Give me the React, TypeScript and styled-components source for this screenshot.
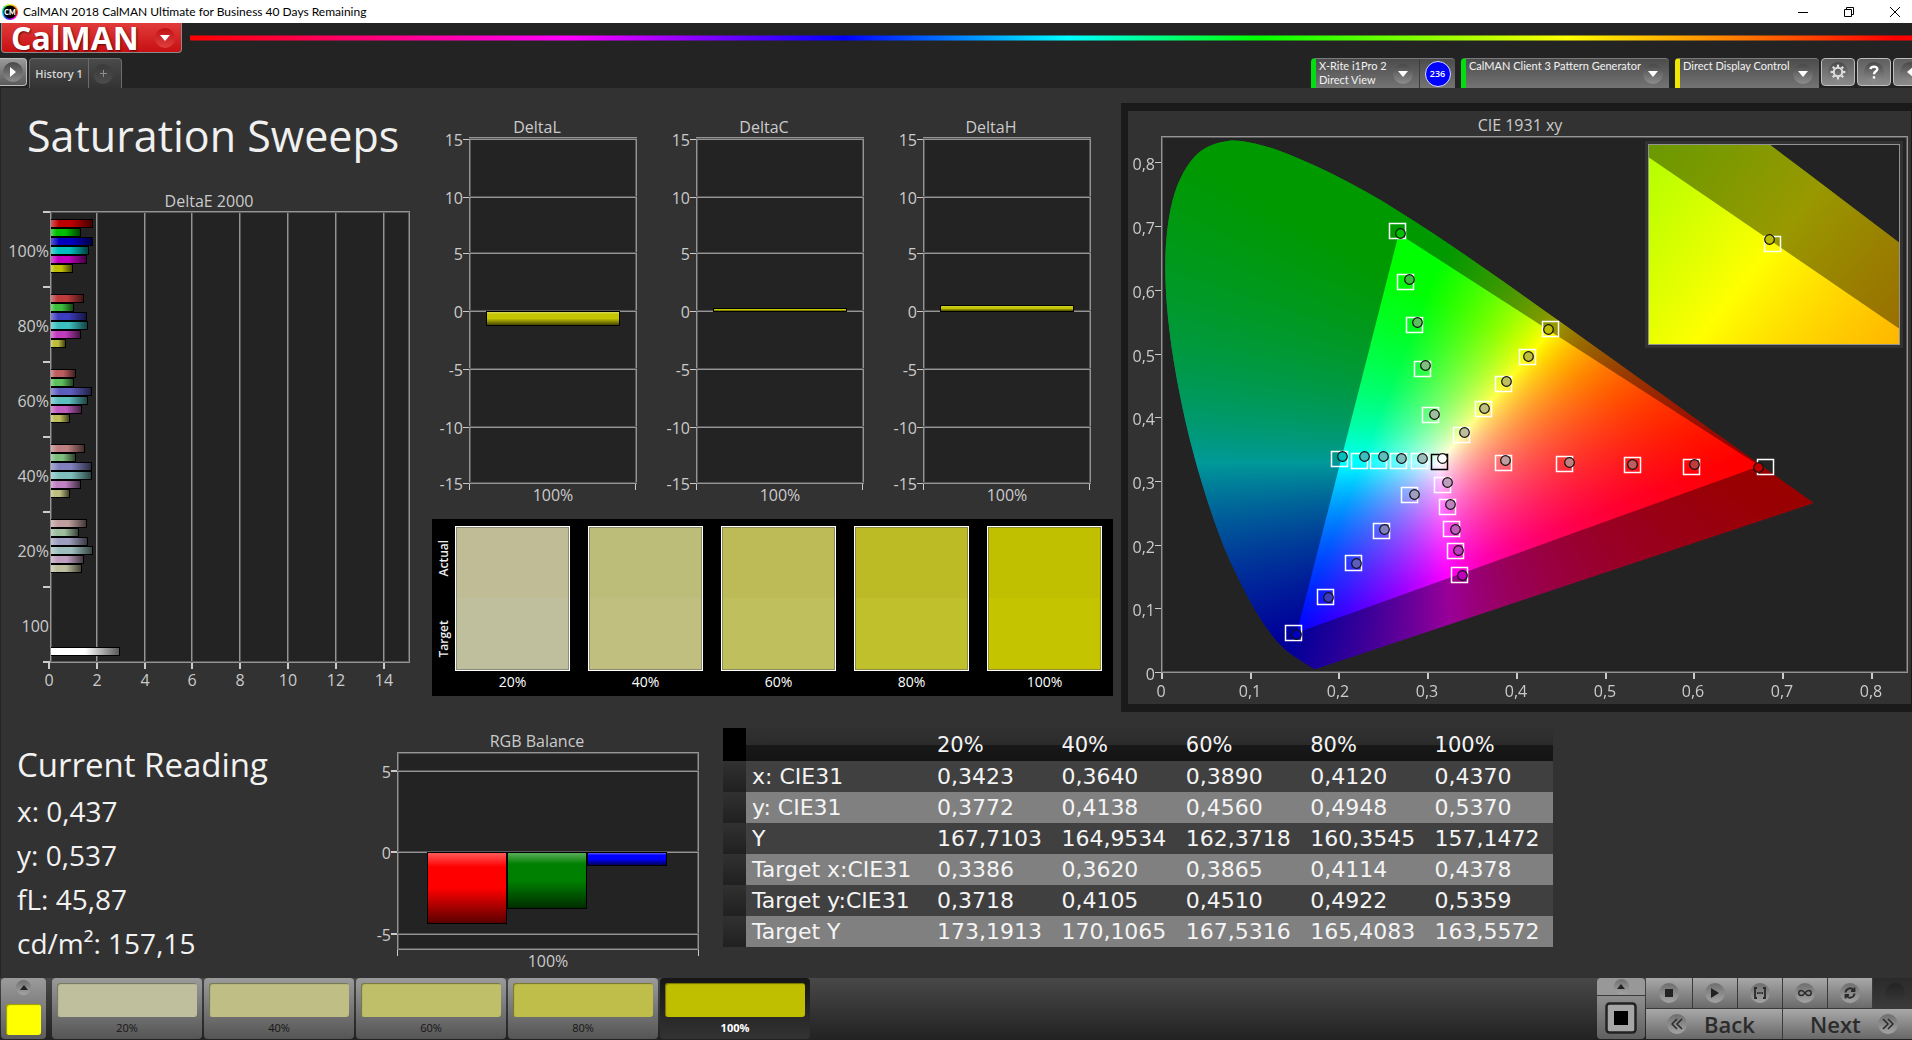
import React, { useLayoutEffect, useRef } from "react";
import styled, { createGlobalStyle, css } from "styled-components";

/* ---------- shared values ---------- */

const SANS = `"Open Sans", "Noto Sans", sans-serif`;
const SMALL = `Lato, "Open Sans", sans-serif`;
const LABEL = "#cbcbcb";
const PLOT = "#232323";
const PANEL = "#323232";

const LEVELS = ["100%", "80%", "60%", "40%", "20%"];
const LOW = [0, 60, 93, 128, 158];
const HIGH = 190;

type Series = "red" | "green" | "blue" | "cyan" | "magenta" | "yellow";
const SERIES: Series[] = ["red", "green", "blue", "cyan", "magenta", "yellow"];
const MASK: Record<Series, number[]> = {
  red: [1, 0, 0],
  green: [0, 1, 0],
  blue: [0, 0, 1],
  cyan: [0, 1, 1],
  magenta: [1, 0, 1],
  yellow: [1, 1, 0],
};
const tone = (series: Series, level: number) =>
  `rgb(${MASK[series].map((on) => (on ? HIGH : LOW[level])).join(",")})`;

/* ---------- global and frame ---------- */

const GlobalStyle = createGlobalStyle`
  *, *::before, *::after { box-sizing: border-box; }
  body { margin: 0; background: ${PANEL}; overflow: hidden; font-family: ${SANS}; }
  button { font-family: inherit; margin: 0; padding: 0; border: 0; cursor: pointer; }
  h1, h2, p { margin: 0; font-weight: 400; }
  svg { display: block; }
`;

const Window = styled.div`
  display: flex;
  flex-direction: column;
  min-height: 100vh;
  overflow: hidden;
`;

const TitleBar = styled.header`
  display: flex;
  align-items: center;
  height: 23px;
  background: #fff;
  color: #000;
  font-family: ${SMALL};
  font-size: 12px;
`;

const AppIcon = styled.span`
  display: grid;
  place-items: center;
  width: 16px;
  height: 16px;
  margin: 0 5px 0 2px;
  border-radius: 50%;
  background: radial-gradient(circle, #000 6px, transparent 7px),
    conic-gradient(#ff2, #f80, #f22, #f0f, #33f, #0cf, #0d4, #ff2);
  color: #fff;
  font-size: 7px;
  font-weight: 800;
`;

const WindowButtons = styled.div`
  display: flex;
  margin-left: auto;
`;

const WindowButton = styled.button`
  display: grid;
  place-items: center;
  width: 46px;
  height: 23px;
  background: none;
  &:last-child {
    width: 40px;
    padding-left: 6px;
  }
`;

const Header = styled.div`
  height: 65px;
  background: ${PLOT};
  display: flex;
  flex-direction: column;
  justify-content: space-between;
`;

const BrandRow = styled.div`
  display: flex;
  align-items: center;
  gap: 8px;
  padding-left: 1px;
`;

const Brand = styled.button`
  display: flex;
  align-items: center;
  justify-content: space-between;
  width: 181px;
  height: 30px;
  padding: 0 6px 0 9px;
  border: 1px solid #8b8b8b;
  border-top: 0;
  border-radius: 0 0 4px 4px;
  background: linear-gradient(#e03c3a, #c80f12);
  color: #fff;
  font: 700 32px/28px ${SANS};
  text-shadow: 1px 1px 2px rgba(60, 0, 0, 0.8);
`;

const Spectrum = styled.div`
  flex: 1;
  height: 6px;
  border: solid rgba(35, 35, 35, 0.5);
  border-width: 1px 0;
  background: linear-gradient(
    90deg,
    #f00 0%,
    #f0f 22%,
    #00f 38%,
    #0ff 51%,
    #0f0 62%,
    #ff0 80%,
    #f00 99%
  );
`;

const TabRow = styled.div`
  display: flex;
  align-items: flex-end;
  height: 31px;
`;

const Disc = styled.span<{ $size?: number; $dark?: boolean }>`
  display: grid;
  place-items: center;
  flex: none;
  width: ${(p) => p.$size ?? 20}px;
  height: ${(p) => p.$size ?? 20}px;
  border-radius: 50%;
  background: ${(p) =>
    p.$dark ? "linear-gradient(#3a3a3a, #4c4c4c)" : "linear-gradient(#484848, #8d8d8d)"};
`;

const BrandDisc = styled(Disc)`
  background: linear-gradient(#c01014, #e04040);
`;

const SquareButton = styled.button<{ $edge?: boolean }>`
  display: grid;
  place-items: center;
  flex: none;
  width: 34px;
  height: 28px;
  margin-bottom: 2px;
  border: 1px solid #bdbdbd;
  border-radius: 4px;
  background: linear-gradient(#5e5e5e, #8b8b8b);
  color: #fff;
  ${(p) =>
    p.$edge &&
    css`
      width: 27px;
      border-left: 0;
      border-radius: 0 4px 4px 0;
      background: linear-gradient(#9a9a9a, #5a5a5a);
    `}
`;

const Tabs = styled.div`
  display: flex;
  height: 30px;
  margin-left: 2px;
  border: 1px solid #6c6c6c;
  border-bottom: 0;
  border-radius: 4px 4px 0 0;
  background: linear-gradient(#4a4a4a, #333);
`;

const Tab = styled.button`
  display: grid;
  place-items: center;
  width: 58px;
  background: none;
  color: #d5d5d5;
  font-size: 11px;
  font-weight: 600;
  & + & {
    width: 33px;
    padding-right: 4px;
    border-left: 1px solid #6c6c6c;
    color: #8d8d8d;
  }
`;

const Sources = styled.div`
  display: flex;
  align-items: flex-end;
  gap: 6px;
  height: 31px;
  margin-left: auto;
  margin-right: -15px;
`;

const Source = styled.div<{ $led: string; $width: number }>`
  display: flex;
  width: ${(p) => p.$width}px;
  height: 30px;
  border-top: 1px solid #7b7b7b;
  border-left: 5px solid ${(p) => p.$led};
  border-radius: 4px 4px 0 0;
  background: linear-gradient(#4c4c4c, #747474);
`;

const SourceButton = styled.button`
  display: flex;
  flex: 1;
  align-items: center;
  justify-content: space-between;
  padding: 0 6px 0 3px;
  background: none;
  color: #f2f2f2;
  font-family: ${SMALL};
  font-size: 11px;
  line-height: 14px;
  text-align: left;
  white-space: nowrap;
`;

const SourceText = styled.span`
  align-self: flex-start;
`;

const CounterCell = styled.div`
  display: grid;
  place-items: center;
  width: 36px;
  border-left: 1px solid #3c3c3c;
`;

const Counter = styled.span`
  display: grid;
  place-items: center;
  width: 26px;
  height: 26px;
  border: 1px solid #dcdcff;
  border-radius: 50%;
  background: #00f;
  color: #fff;
  font-size: 9px;
  font-weight: 600;
`;

const ToolButtons = styled.div`
  display: flex;
  gap: 2px;
  margin-left: -4px;
`;

/* ---------- page ---------- */

const Page = styled.main`
  flex: 1;
  background: ${PANEL};
  border-left: 1px solid #242424;
`;

const TopGrid = styled.section`
  display: grid;
  grid-template-columns: 431fr 681fr 799fr;
  align-items: start;
`;

const BottomGrid = styled.section`
  display: grid;
  grid-template-columns: 374fr 348fr 830fr 359fr;
  align-items: start;
  padding-top: 10px;
`;

const Chart = styled.svg`
  width: 100%;
  height: auto;
  font-family: ${SANS};
  font-size: 16px;
  fill: ${LABEL};
`;

const Title = styled.h1`
  padding: 0 0 4px 26px;
  color: #f0f0f0;
  font-size: 43px;
  line-height: 96px;
  white-space: nowrap;
`;

const Middle = styled.div`
  padding-top: 24px;
`;

const DeltaRow = styled.div`
  display: grid;
  grid-template-columns: repeat(3, 1fr);
`;

const SwatchPanel = styled.div`
  display: grid;
  grid-template-columns: 23px 1fr;
  height: 177px;
  padding: 7px 11px 0 0;
  background: #000;
  color: #fff;
`;

const SideLabels = styled.div`
  display: flex;
  flex-direction: column;
  height: 161px;
  margin-top: -8px;
`;

const SideLabel = styled.span`
  flex: 1;
  align-self: center;
  writing-mode: vertical-rl;
  transform: rotate(180deg);
  text-align: center;
  color: #eee;
  font-size: 12px;
  font-weight: 600;
  line-height: 18px;
`;

const Swatches = styled.div`
  display: grid;
  grid-template-columns: repeat(5, 1fr);
  gap: 18px;
`;

const SwatchItem = styled.figure`
  margin: 0;
  text-align: center;
  font-size: 14px;
  line-height: 22px;
`;

const SwatchBox = styled.div<{ $actual: string; $target: string }>`
  height: 145px;
  border: 1px solid #fff;
  box-shadow: inset 0 0 0 1px rgba(90, 90, 90, 0.5);
  background: linear-gradient(${(p) => p.$actual} 50%, ${(p) => p.$target} 50%);
`;

const CieColumn = styled.div`
  padding: 15px 0 0 8px;
`;

const CieFrame = styled.div`
  border: solid #1a1a1a;
  border-width: 8px 1px 8px 7px;
  background: ${PANEL};
`;

const Reading = styled.div`
  padding: 9px 0 0 16px;
  color: #f2f2f2;
  white-space: nowrap;
`;

const ReadingTitle = styled.h2`
  font-size: 33px;
  line-height: 48px;
`;

const ReadingValue = styled.p`
  font-size: 28px;
  line-height: 44px;
`;

const DataTable = styled.table`
  width: 100%;
  margin-top: -4px;
  border-collapse: collapse;
  table-layout: fixed;
  color: #f4f4f4;
  font-family: "DejaVu Sans", sans-serif;
  font-size: 22px;
  line-height: 30px;
  white-space: nowrap;
  th,
  td {
    padding: 1px 0 0 6px;
    text-align: left;
    font-weight: 400;
  }
`;

const HeadRow = styled.tr`
  height: 33px;
  background: linear-gradient(#313131 0, #2b2b2b 50%, #181818 52%, #141414 100%);
  th {
    font-size: 21px;
  }
  td:first-child {
    background: #000;
  }
`;

const BodyRow = styled.tr<{ $light: boolean }>`
  height: 31px;
  background: ${(p) => (p.$light ? "#808080" : "#404040")};
  td:first-child {
    background: linear-gradient(#313131, #202020);
  }
`;

/* ---------- footer ---------- */

const Footer = styled.footer`
  display: flex;
  gap: 2px;
  height: 62px;
  padding: 0 0 1px 1px;
  background: linear-gradient(#484848, #222);
`;

const FooterTile = styled.button`
  display: flex;
  flex-direction: column;
  align-items: center;
  justify-content: space-between;
  width: 45px;
  margin-right: 4px;
  padding: 2px 0 4px;
  border-radius: 4px;
  background: linear-gradient(#9b9b9b, #5c5c5c);
`;

const Chip = styled.span<{ $fill: string }>`
  display: block;
  width: 35px;
  height: 31px;
  border-radius: 3px;
  box-shadow: inset 1px 1px 1px rgba(0, 0, 0, 0.4);
  background: ${(p) => p.$fill};
`;

const PatchButton = styled.button<{ $active: boolean }>`
  display: flex;
  flex-direction: column;
  width: 150px;
  padding: 5px 5px 0;
  border-radius: 4px;
  background: ${(p) =>
    p.$active ? "linear-gradient(#161616, #333)" : "linear-gradient(#9b9b9b, #555)"};
  color: ${(p) => (p.$active ? "#fff" : "#161616")};
  font-size: 11px;
  font-weight: ${(p) => (p.$active ? 700 : 400)};
  line-height: 22px;
`;

const PatchFill = styled(Chip)`
  width: 100%;
  height: 36px;
`;

const PatchLabel = styled.span`
  align-self: center;
`;

const Transport = styled.div`
  display: flex;
  gap: 1px;
  margin-left: auto;
  margin-right: -5px;
`;

const StackTile = styled.div`
  display: grid;
  grid-template-rows: 18px 1fr;
  width: 48px;
`;

const StackButton = styled.button`
  display: grid;
  place-items: center;
  border-radius: 0 0 4px 4px;
  background: linear-gradient(#8e8e8e, #606060);
  &:first-child {
    border-bottom: 1px solid #3c3c3c;
    border-radius: 4px 4px 0 0;
    background: #989898;
  }
`;

const TransportGrid = styled.div`
  display: grid;
  grid-template-columns: 46px repeat(5, 44px);
  grid-template-rows: 30px 30px;
  gap: 1px;
  background: #3a3a3a;
`;

const TransportButton = styled.button<{ $off?: boolean }>`
  display: grid;
  place-items: center;
  background: ${(p) => (p.$off ? "linear-gradient(#2a2a2a, #3a3a3a)" : "linear-gradient(#a8a8a8, #6a6a6a)")};
`;

const StepButton = styled.button`
  display: flex;
  align-items: center;
  grid-column: span 3;
  gap: 17px;
  padding-left: 21px;
  background: linear-gradient(#a8a8a8, #686868);
  color: #2b2b2b;
  font-size: 22px;
  font-weight: 600;
  line-height: 30px;
  & + & {
    padding-left: 27px;
  }
`;

const LightDisc = styled(Disc)`
  background: linear-gradient(#6e6e6e, #a4a4a4);
`;

const OffDisc = styled(Disc)`
  background: linear-gradient(#232323, #383838);
`;

/* ---------- chart parts ---------- */

const GridH = ({ x, y, w }: { x: number; y: number; w: number }) => (
  <>
    <rect x={x} y={y - 1} width={w} height={1} fill="#585858" />
    <rect x={x} y={y} width={w} height={1} fill="#949494" />
  </>
);

const GridV = ({ x, y, h }: { x: number; y: number; h: number }) => (
  <>
    <rect x={x - 1} y={y} width={1} height={h} fill="#949494" />
    <rect x={x} y={y} width={1} height={h} fill="#585858" />
  </>
);

const Frame = ({ x, y, w, h, fill = "none" }: { x: number; y: number; w: number; h: number; fill?: string }) => (
  <>
    <rect x={x} y={y} width={w} height={h} fill={fill} />
    <rect x={x + 0.5} y={y + 0.5} width={w - 1} height={h - 1} fill="none" stroke="#949494" />
    <rect x={x + 1.5} y={y + 1.5} width={w - 3} height={h - 3} fill="none" stroke="#585858" />
  </>
);

const Shades = ({ id, vertical }: { id: string; vertical?: boolean }) => (
  <defs>
    <linearGradient id={id} x2={vertical ? 0 : 1} y2={vertical ? 1 : 0}>
      <stop offset="0" stopColor="#fff" stopOpacity="0.35" />
      <stop offset="0.2" stopColor="#fff" stopOpacity="0" />
      <stop offset="0.5" stopColor="#000" stopOpacity="0" />
      <stop offset="1" stopColor="#000" stopOpacity="0.65" />
    </linearGradient>
  </defs>
);

const Bar = ({ x, y, w, h, fill, shade }: { x: number; y: number; w: number; h: number; fill: string; shade: string }) => (
  <>
    <rect x={x} y={y} width={w} height={h} fill="#000" />
    <rect x={x + 1} y={y + 1} width={w - 2} height={h - 2} fill={fill} />
    <rect x={x + 1} y={y + 1} width={w - 2} height={h - 2} fill={`url(#${shade})`} />
  </>
);

/* ---------- DeltaE chart ---------- */

const DELTA_E = [
  [1.78, 1.28, 1.78, 1.65, 1.53, 0.95],
  [1.41, 1.0, 1.53, 1.57, 1.28, 0.65],
  [1.07, 1.0, 1.74, 1.57, 1.32, 0.82],
  [1.46, 1.07, 1.74, 1.74, 1.28, 0.82],
  [1.53, 1.2, 1.57, 1.78, 1.41, 1.32],
];

const DeltaEChart = () => {
  const unit = 23.9;
  return (
    <Chart viewBox="0 0 431 534" role="img" aria-label="DeltaE 2000">
      <Shades id="shadeE" />
      <text x="208" y="19" textAnchor="middle">DeltaE 2000</text>
      <rect x="49" y="23" width="360" height="452" fill={PLOT} />
      {[2, 4, 6, 8, 10, 12, 14].map((v) => (
        <GridV key={v} x={48 + Math.round(v * unit)} y={24} h={450} />
      ))}
      <Frame x={49} y={23} w={360} h={452} />
      {DELTA_E.map((row, level) =>
        row.map((v, i) => (
          <Bar
            key={`${level}-${i}`}
            x={49}
            y={31 + level * 75 + i * 9}
            w={Math.round(v * unit)}
            h={9}
            fill={tone(SERIES[i], level)}
            shade="shadeE"
          />
        ))
      )}
      <Bar x={49} y={459} w={70} h={9} fill="#fff" shade="shadeE" />
      <rect x="49" y="23" width="1" height="452" fill="#949494" />
      {[...LEVELS, "100"].map((label, i) => (
        <text key={label} x="48" y={69 + i * 75} textAnchor="end">{label}</text>
      ))}
      {[0, 1, 2, 3, 4, 5, 6].map((i) => (
        <rect key={i} x="42" y={23 + i * 75} width="7" height="2" />
      ))}
      {[0, 2, 4, 6, 8, 10, 12, 14].map((v) => (
        <React.Fragment key={v}>
          <rect x={47 + Math.round(v * unit)} y="475" width="2" height="6" />
          <text x={48 + Math.round(v * unit)} y="498" textAnchor="middle">{v}</text>
        </React.Fragment>
      ))}
    </Chart>
  );
};

/* ---------- DeltaL / C / H charts ---------- */

const DeltaChart = ({ name, top, height }: { name: string; top: number; height: number }) => (
  <Chart viewBox="0 0 227 407" role="img" aria-label={name}>
    <Shades id={`shade${name}`} vertical />
    <text x="105" y="21" textAnchor="middle">{name}</text>
    <Frame x={37} y={25} w={168} h={347} fill={PLOT} />
    {[15, 10, 5, 0, -5, -10, -15].map((v, i) => {
      const y = [27, 85, 141, 199, 257, 315, 371][i];
      return (
        <React.Fragment key={v}>
          <GridH x={37} y={y} w={168} />
          <rect x="31" y={y} width="6" height="1" />
          <text x="31" y={y + 7} textAnchor="end">{v}</text>
        </React.Fragment>
      );
    })}
    <Bar x={54} y={top} w={134} h={height} fill="#c4c400" shade={`shade${name}`} />
    <rect x="37" y="372" width="1" height="6" />
    <rect x="203" y="372" width="1" height="6" />
    <text x="121" y="389" textAnchor="middle">100%</text>
  </Chart>
);

/* ---------- RGB balance chart ---------- */

const RgbChart = () => (
  <Chart viewBox="0 0 348 246" role="img" aria-label="RGB Balance">
    <Shades id="shadeRgb" vertical />
    <text x="162" y="15" textAnchor="middle">RGB Balance</text>
    <Frame x={22} y={20} w={302} h={198} fill={PLOT} />
    {[5, 0, -5].map((v, i) => {
      const y = [39, 120, 202][i];
      return (
        <React.Fragment key={v}>
          <GridH x={22} y={y} w={302} />
          <rect x="16" y={y - 1} width="6" height="2" />
          <text x="16" y={y + 7} textAnchor="end">{v}</text>
        </React.Fragment>
      );
    })}
    <Bar x={52} y={120} w={80} h={72} fill="#f00" shade="shadeRgb" />
    <Bar x={132} y={120} w={80} h={57} fill="#008000" shade="shadeRgb" />
    <Bar x={212} y={120} w={80} h={14} fill="#00f" shade="shadeRgb" />
    <rect x="22" y="218" width="1" height="6" />
    <rect x="323" y="218" width="1" height="6" />
    <text x="173" y="235" textAnchor="middle">100%</text>
  </Chart>
);

/* ---------- CIE chart ---------- */

const LOCUS: [number, number][] = [
  [0.1741, 0.005], [0.1714, 0.0051], [0.1689, 0.0069], [0.1644, 0.0109], [0.1566, 0.0177],
  [0.144, 0.0297], [0.1355, 0.0399], [0.1241, 0.0578], [0.1096, 0.0868], [0.0913, 0.1327],
  [0.0687, 0.2007], [0.0454, 0.295], [0.0235, 0.4127], [0.0082, 0.5384], [0.0039, 0.6548],
  [0.0139, 0.7502], [0.0389, 0.812], [0.0743, 0.8338], [0.1142, 0.8262], [0.1547, 0.8059],
  [0.1929, 0.7816], [0.2296, 0.7543], [0.2658, 0.7243], [0.3016, 0.6923], [0.3373, 0.6589],
  [0.3731, 0.6245], [0.4087, 0.5896], [0.4441, 0.5547], [0.4788, 0.5202], [0.5125, 0.4866],
  [0.5448, 0.4544], [0.5752, 0.4242], [0.6029, 0.3965], [0.627, 0.3725], [0.6482, 0.3514],
  [0.6658, 0.334], [0.6915, 0.3083], [0.7079, 0.292], [0.719, 0.2809], [0.7347, 0.2653],
];
const GAMUT: [number, number][] = [[0.674, 0.3235], [0.267, 0.688], [0.152, 0.0615]];

type GamutProps = { width: number; height: number; x0: number; x1: number; y0: number; y1: number };

/* Paints every chromaticity at full brightness inside the gamut and dimmed outside it. */
const GamutCanvas = ({ width, height, x0, x1, y0, y1 }: GamutProps) => {
  const ref = useRef<HTMLCanvasElement>(null);
  useLayoutEffect(() => {
    const ctx = ref.current?.getContext("2d");
    if (!ctx) return;
    const colours = document.createElement("canvas");
    colours.width = width;
    colours.height = height;
    const cctx = colours.getContext("2d")!;
    const img = cctx.createImageData(width, height);
    for (let j = 0; j < height; j++) {
      const y = Math.max(1e-4, y1 - ((j + 0.5) / height) * (y1 - y0));
      for (let i = 0; i < width; i++) {
        const x = x0 + ((i + 0.5) / width) * (x1 - x0);
        const z = 1 - x - y;
        const r = Math.max(0, 3.2406 * x - 1.5372 * y - 0.4986 * z);
        const g = Math.max(0, -0.9689 * x + 1.8758 * y + 0.0415 * z);
        const b = Math.max(0, 0.0557 * x - 0.204 * y + 1.057 * z);
        const m = Math.max(r, g, b) || 1;
        const k = (j * width + i) * 4;
        img.data[k] = (255 * r) / m;
        img.data[k + 1] = (255 * g) / m;
        img.data[k + 2] = (255 * b) / m;
        img.data[k + 3] = 255;
      }
    }
    cctx.putImageData(img, 0, 0);

    const px = (p: [number, number]): [number, number] => [
      ((p[0] - x0) / (x1 - x0)) * width,
      ((y1 - p[1]) / (y1 - y0)) * height,
    ];
    ctx.clearRect(0, 0, width, height);

    ctx.save();
    ctx.beginPath();
    const pts = LOCUS.map(px);
    ctx.moveTo(...pts[0]);
    for (let i = 0; i < pts.length - 1; i++) {
      const a = pts[Math.max(0, i - 1)];
      const b = pts[i];
      const c = pts[i + 1];
      const d = pts[Math.min(pts.length - 1, i + 2)];
      ctx.bezierCurveTo(
        b[0] + (c[0] - a[0]) / 6, b[1] + (c[1] - a[1]) / 6,
        c[0] - (d[0] - b[0]) / 6, c[1] - (d[1] - b[1]) / 6,
        c[0], c[1]
      );
    }
    ctx.closePath();
    ctx.clip();
    ctx.drawImage(colours, 0, 0);
    ctx.fillStyle = "rgba(0,0,0,0.4)";
    ctx.fillRect(0, 0, width, height);
    ctx.restore();

    ctx.save();
    ctx.beginPath();
    GAMUT.map(px).forEach((p, i) => (i ? ctx.lineTo(...p) : ctx.moveTo(...p)));
    ctx.closePath();
    ctx.clip();
    ctx.drawImage(colours, 0, 0);
    ctx.restore();
  }, [width, height, x0, x1, y0, y1]);
  return <GamutSurface ref={ref} width={width} height={height} />;
};

const GamutSurface = styled.canvas`
  display: block;
`;

/* Each entry: target x, target y, measured x, measured y, from 20% up to 100%. */
const MARKERS: Record<Series, number[][]> = {
  green: [[1430, 415, 1434, 414], [1422, 369, 1425, 365], [1414, 325, 1417, 322], [1405, 282, 1409, 279], [1397, 231, 1400, 233]],
  yellow: [[1461, 435, 1464, 432], [1483, 409, 1484, 408], [1503, 384, 1506, 381], [1527, 357, 1528, 356], [1550, 329, 1548, 329]],
  cyan: [[1419, 461, 1422, 458], [1398, 461, 1401, 458], [1378, 461, 1383, 456], [1359, 461, 1364, 456], [1339, 459, 1342, 456]],
  red: [[1503, 463, 1505, 460], [1564, 464, 1569, 462], [1632, 465, 1632, 464], [1691, 467, 1694, 464], [1765, 467, 1758, 467]],
  blue: [[1409, 495, 1414, 494], [1381, 531, 1384, 529], [1353, 563, 1356, 563], [1325, 597, 1328, 597], [1293, 633, 1296, 634]],
  magenta: [[1442, 485, 1447, 482], [1447, 507, 1450, 504], [1451, 529, 1455, 529], [1455, 551, 1458, 550], [1459, 575, 1462, 575]],
};

const Marker = ({ at, fill, edge = "#fff" }: { at: number[]; fill: string; edge?: string }) => (
  <>
    <rect x={at[0] - 7.5} y={at[1] - 7.5} width="16" height="15" fill="none" stroke={edge} strokeWidth="1.5" />
    <circle cx={at[2] + 0.5} cy={at[3] + 0.5} r="4.8" fill={fill} stroke="#111" strokeWidth="1.2" />
  </>
);

const CieChart = () => (
  <Chart viewBox="1128 111 783 593" role="img" aria-label="CIE 1931 xy">
    <text x="1520" y="131" textAnchor="middle">CIE 1931 xy</text>
    <rect x="1162" y="137" width="745" height="535" fill={PLOT} />
    <foreignObject x="1162" y="137" width="745" height="535">
      <GamutCanvas width={745} height={535} x0={0} x1={0.84} y0={0} y1={0.84} />
    </foreignObject>
    <Frame x={1161} y={136} w={747} h={537} />
    {[0, 1, 2, 3, 4, 5, 6, 7, 8].map((v) => {
      const label = v ? `0,${v}` : "0";
      const x = Math.round(1161 + v * 88.7);
      const y = Math.round(672 - v * 63.7);
      return (
        <React.Fragment key={v}>
          <rect x={x} y="673" width="2" height="6" />
          <text x={x} y="697" textAnchor="middle">{label}</text>
          <rect x="1155" y={y} width="6" height="1" />
          <text x="1155" y={y + 8} textAnchor="end">{label}</text>
        </React.Fragment>
      );
    })}
    <Marker at={[1439, 462, 1442, 458]} fill="#fff" edge="#000" />
    {SERIES.map((s) =>
      MARKERS[s].map((at, i) => <Marker key={`${s}${i}`} at={at} fill={tone(s, 4 - i)} />)
    )}
    <rect x="1645" y="141" width="258" height="207" fill={PANEL} />
    <rect x="1649" y="145" width="250" height="200" fill={PLOT} />
    <foreignObject x="1649" y="145" width="250" height="200">
      <GamutCanvas width={250} height={200} x0={0.4115} x1={0.4635} y0={0.5075} y1={0.562} />
    </foreignObject>
    <rect x="1648.5" y="144.5" width="251" height="200" fill="none" stroke="#949494" />
    <Marker at={[1772, 244, 1769, 239]} fill="#bebe00" />
  </Chart>
);

/* ---------- data ---------- */

const SWATCHES = [
  ["20%", "#c0bc96", "#bfbf9e"],
  ["40%", "#bdbd7a", "#c0bf80"],
  ["60%", "#bdbb58", "#c0bf5e"],
  ["80%", "#bcbb26", "#c0bf2c"],
  ["100%", "#c0bf00", "#c4c400"],
];

const PATCHES = [
  ["20%", "#bfbf9e"],
  ["40%", "#bfbe85"],
  ["60%", "#bfbe69"],
  ["80%", "#bfbe4a"],
  ["100%", "#bfbf00"],
];

const ROWS = [
  ["x: CIE31", "0,3423", "0,3640", "0,3890", "0,4120", "0,4370"],
  ["y: CIE31", "0,3772", "0,4138", "0,4560", "0,4948", "0,5370"],
  ["Y", "167,7103", "164,9534", "162,3718", "160,3545", "157,1472"],
  ["Target x:CIE31", "0,3386", "0,3620", "0,3865", "0,4114", "0,4378"],
  ["Target y:CIE31", "0,3718", "0,4105", "0,4510", "0,4922", "0,5359"],
  ["Target Y", "173,1913", "170,1065", "167,5316", "165,4083", "163,5572"],
];

/* ---------- icons ---------- */

const Triangle = ({ d, w, h, fill = "#fff" }: { d: string; w: number; h: number; fill?: string }) => (
  <svg width={w} height={h} viewBox={`0 0 ${w} ${h}`}><path d={d} fill={fill} /></svg>
);
const Down = () => <Triangle w={10} h={6} d="M0 0h10L5 6z" />;
const Up = () => <Triangle w={8} h={5} d="M0 5h8L4 0z" fill="#222" />;

const Gear = () => (
  <svg width="16" height="16" viewBox="-8 -8 16 16" fill="none" stroke="#dedede">
    <circle r="4.2" strokeWidth="2" />
    {[0, 45, 90, 135, 180, 225, 270, 315].map((a) => (
      <path key={a} d="M0-5V-7.4" strokeWidth="2.2" transform={`rotate(${a})`} />
    ))}
  </svg>
);

const Question = () => (
  <svg width="12" height="14" viewBox="0 0 12 14" fill="none" stroke="#fff" strokeWidth="2.4">
    <path d="M2.5 4.2C2.8 1 9.3.8 9.3 4.2 9.3 6.4 6 6.3 6 9.2" />
    <path d="M6 11.2v2.4" />
  </svg>
);

const Stroke = ({ children, w = 14 }: { children: React.ReactNode; w?: number }) => (
  <svg width={w} height="12" viewBox={`0 0 ${w} 12`} fill="none" stroke="#2a2a2a" strokeWidth="1.8">
    {children}
  </svg>
);

const Patches = () => (
  <>
    {PATCHES.map(([label, fill], i) => (
      <PatchButton key={label} type="button" $active={i === 4}>
        <PatchFill $fill={fill} />
        <PatchLabel>{label}</PatchLabel>
      </PatchButton>
    ))}
  </>
);

/* ---------- app ---------- */

export default function App() {
  return (
    <Window>
      <GlobalStyle />
      <TitleBar>
        <AppIcon>CM</AppIcon>
        CalMAN 2018 CalMAN Ultimate for Business 40 Days Remaining
        <WindowButtons>
          <WindowButton type="button" aria-label="Minimize">
            <svg width="10" height="10"><path d="M0 5.5h10" stroke="#000" /></svg>
          </WindowButton>
          <WindowButton type="button" aria-label="Restore">
            <svg width="10" height="10" fill="none" stroke="#000">
              <path d="M.5 2.5h7v7h-7zM2.5 2.5v-2h7v7h-2" />
            </svg>
          </WindowButton>
          <WindowButton type="button" aria-label="Close">
            <svg width="10" height="10" stroke="#000"><path d="M0 0l10 10M10 0L0 10" /></svg>
          </WindowButton>
        </WindowButtons>
      </TitleBar>

      <Header>
        <BrandRow>
          <Brand type="button">
            CalMAN
            <BrandDisc><Down /></BrandDisc>
          </Brand>
          <Spectrum />
        </BrandRow>
        <TabRow>
          <SquareButton type="button" $edge aria-label="Expand">
            <Disc><Triangle w={6} h={10} d="M0 0v10l6-5z" /></Disc>
          </SquareButton>
          <Tabs>
            <Tab type="button">History 1</Tab>
            <Tab type="button" aria-label="Add tab">
              <Disc $dark>
                <svg width="7" height="7"><path d="M3.5 0v7M0 3.5h7" stroke="#8d8d8d" /></svg>
              </Disc>
            </Tab>
          </Tabs>
          <Sources>
            <Source $led="#00e010" $width={144}>
              <SourceButton type="button">
                <SourceText>X-Rite i1Pro 2<br />Direct View</SourceText>
                <Disc><Down /></Disc>
              </SourceButton>
              <CounterCell><Counter>236</Counter></CounterCell>
            </Source>
            <Source $led="#00e010" $width={208}>
              <SourceButton type="button">
                <SourceText>CalMAN Client 3 Pattern Generator</SourceText>
                <Disc><Down /></Disc>
              </SourceButton>
            </Source>
            <Source $led="#f0e800" $width={144}>
              <SourceButton type="button">
                <SourceText>Direct Display Control</SourceText>
                <Disc><Down /></Disc>
              </SourceButton>
            </Source>
            <ToolButtons>
              <SquareButton type="button" aria-label="Settings"><Disc><Gear /></Disc></SquareButton>
              <SquareButton type="button" aria-label="Help"><Disc><Question /></Disc></SquareButton>
              <SquareButton type="button" aria-label="Collapse">
                <Disc><Triangle w={6} h={10} d="M6 0v10L0 5z" /></Disc>
              </SquareButton>
            </ToolButtons>
          </Sources>
        </TabRow>
      </Header>

      <Page>
        <TopGrid>
          <div>
            <Title>Saturation Sweeps</Title>
            <DeltaEChart />
          </div>
          <Middle>
            <DeltaRow>
              <DeltaChart name="DeltaL" top={199} height={15} />
              <DeltaChart name="DeltaC" top={196} height={4} />
              <DeltaChart name="DeltaH" top={193} height={7} />
            </DeltaRow>
            <SwatchPanel>
              <SideLabels>
                <SideLabel>Actual</SideLabel>
                <SideLabel>Target</SideLabel>
              </SideLabels>
              <Swatches>
                {SWATCHES.map(([label, actual, target]) => (
                  <SwatchItem key={label}>
                    <SwatchBox $actual={actual} $target={target} />
                    <figcaption>{label}</figcaption>
                  </SwatchItem>
                ))}
              </Swatches>
            </SwatchPanel>
          </Middle>
          <CieColumn>
            <CieFrame><CieChart /></CieFrame>
          </CieColumn>
        </TopGrid>

        <BottomGrid>
          <Reading>
            <ReadingTitle>Current Reading</ReadingTitle>
            <ReadingValue>x: 0,437</ReadingValue>
            <ReadingValue>y: 0,537</ReadingValue>
            <ReadingValue>fL: 45,87</ReadingValue>
            <ReadingValue>cd/m²: 157,15</ReadingValue>
          </Reading>
          <RgbChart />
          <DataTable>
            <colgroup>
              <col width="23" />
              <col width="185" />
              <col /><col /><col /><col /><col />
            </colgroup>
            <thead>
              <HeadRow>
                <td />
                <td />
                {SWATCHES.map(([label]) => <th key={label} scope="col">{label}</th>)}
              </HeadRow>
            </thead>
            <tbody>
              {ROWS.map(([name, ...values], i) => (
                <BodyRow key={name} $light={i % 2 === 1}>
                  <td />
                  <th scope="row">{name}</th>
                  {values.map((v) => <td key={v}>{v}</td>)}
                </BodyRow>
              ))}
            </tbody>
          </DataTable>
        </BottomGrid>
      </Page>

      <Footer>
        <FooterTile type="button" aria-label="Current patch">
          <LightDisc $size={15}><Up /></LightDisc>
          <Chip $fill="#ff0" />
        </FooterTile>
        <Patches />
        <Transport>
          <StackTile>
            <StackButton type="button" aria-label="Expand"><LightDisc $size={15}><Up /></LightDisc></StackButton>
            <StackButton type="button" aria-label="Pattern window">
              <svg width="32" height="32">
                <rect x="1.5" y="1.5" width="29" height="29" rx="3" fill="#a6a6a6" stroke="#222" strokeWidth="2.5" />
                <rect x="9" y="9" width="14" height="14" fill="#000" />
              </svg>
            </StackButton>
          </StackTile>
          <TransportGrid>
            <TransportButton type="button" aria-label="Stop">
              <LightDisc><Stroke w={8}><path d="M0 2h8v8H0z" fill="#222" stroke="none" /></Stroke></LightDisc>
            </TransportButton>
            <TransportButton type="button" aria-label="Play">
              <LightDisc><Stroke w={10}><path d="M1 1v10l8-5z" fill="#222" stroke="none" /></Stroke></LightDisc>
            </TransportButton>
            <TransportButton type="button" aria-label="Read series">
              <LightDisc>
                <Stroke><path d="M4 1H2v10h2M10 1h2v10h-2M4 6h1.5M6.2 6h1.5M8.5 6H10" /></Stroke>
              </LightDisc>
            </TransportButton>
            <TransportButton type="button" aria-label="Continuous">
              <LightDisc>
                <Stroke><path d="M7 6C5.500 4 4.500 3.500 3.300 3.500a2.500 2.500 0 0 0 0 5C4.500 8.500 5.500 8 7 6s2.500-2.500 3.700-2.500a2.500 2.500 0 0 1 0 5C9.500 8.500 8.500 8 7 6z" strokeWidth="1.4" /></Stroke>
              </LightDisc>
            </TransportButton>
            <TransportButton type="button" aria-label="Repeat">
              <LightDisc>
                <Stroke w={12}><path d="M1.5 5.5A4.5 4.5 0 0 1 9.5 3M10.5.5v3.5H7M10.5 6.5A4.5 4.5 0 0 1 2.5 9M1.5 11.5V8H5" /></Stroke>
              </LightDisc>
            </TransportButton>
            <TransportButton type="button" $off aria-label="Record"><OffDisc /></TransportButton>
            <StepButton type="button">
              <LightDisc><Stroke w={12}><path d="M6 1L1 6l5 5M11 1L6 6l5 5" strokeWidth="1.5" /></Stroke></LightDisc>
              Back
            </StepButton>
            <StepButton type="button">
              Next
              <LightDisc><Stroke w={12}><path d="M1 1l5 5-5 5M6 1l5 5-5 5" strokeWidth="1.5" /></Stroke></LightDisc>
            </StepButton>
          </TransportGrid>
        </Transport>
      </Footer>
    </Window>
  );
}
